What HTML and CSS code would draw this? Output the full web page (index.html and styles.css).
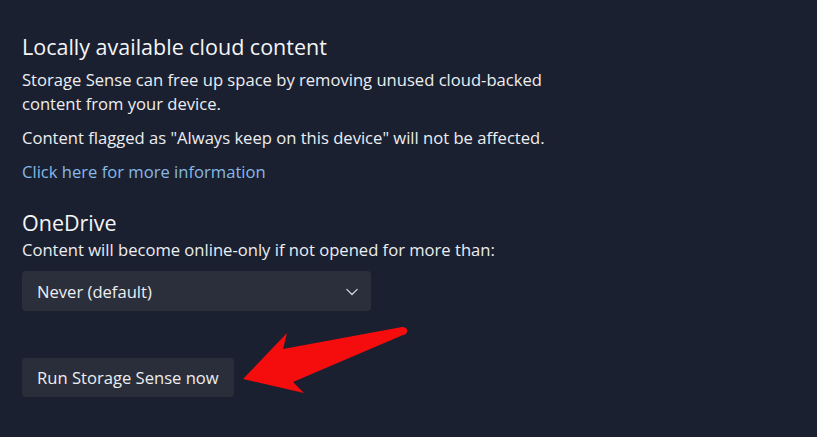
FILE: index.html
```html
<!DOCTYPE html>
<html>
<head>
<meta charset="utf-8">
<link rel="stylesheet" href="styles.css">
</head>
<body>
<div class="page">
  <section class="group">
    <h2 class="title">Locally available cloud content</h2>
    <p class="text first">Storage Sense can free up space by removing unused cloud-backed<br>content from your device.</p>
    <p class="text note">Content flagged as "Always keep on this device" will not be affected.</p>
    <a class="link" href="#">Click here for more information</a>
  </section>
  <section class="group onedrive">
    <h2 class="title">OneDrive</h2>
    <p class="text sub">Content will become online-only if not opened for more than:</p>
    <div class="select">
      <span>Never (default)</span>
      <svg class="chev" width="12" height="8" viewBox="0 0 12 8"><path d="M0.8 1.3 L6 6.5 L11.2 1.3" fill="none" stroke="#d6d8de" stroke-width="1.2" stroke-linecap="round" stroke-linejoin="round"/></svg>
    </div>
  </section>
  <div class="actions">
    <button class="btn">Run Storage Sense now</button>
  </div>
  <svg class="arrow" width="817" height="437" viewBox="0 0 817 437">
    <path d="M243 379 L287 333 L283 349 L402 327 Q408 327 407 332 Q406 335 403 335 L293 382 L304 393 Z" fill="#f50c0c"/>
  </svg>
</div>
</body>
</html>
```
FILE: styles.css
```css
html, body {
  margin: 0;
  padding: 0;
  background: #1b2030;
  width: 817px;
  height: 437px;
  overflow: hidden;
}
.page {
  position: relative;
  padding: 33px 0 0 22px;
  font-family: "Open Sans", "Noto Sans", sans-serif;
  color: #eceef1;
  box-sizing: border-box;
  height: 437px;
}
.title {
  margin: 0;
  font-weight: 400;
  font-size: 21.5px;
  line-height: 28px;
  color: #f4f5f7;
}
.text {
  margin: 0;
  font-size: 16.6px;
  line-height: 24px;
}
.first {
  margin-top: 7px;
}
.note {
  margin-top: 10px;
}
.link {
  display: block;
  margin-top: 10px;
  font-size: 16.6px;
  line-height: 24px;
  color: #85b9e6;
  text-decoration: none;
}
.onedrive {
  margin-top: 25px;
}
.sub {
  margin-top: 1px;
}
.select {
  margin-top: 9px;
  width: 349px;
  height: 40px;
  box-sizing: border-box;
  background: #2b2f3b;
  border-radius: 4px;
  display: flex;
  align-items: center;
  justify-content: space-between;
  padding: 0 13px 0 15px;
  font-size: 16.6px;
  color: #eceef1;
}
.chev {
  margin-top: 1px;
}
.actions {
  margin-top: 47px;
}
.btn {
  height: 39px;
  width: 212px;
  background: #2a2e3a;
  color: #eceef1;
  border: none;
  border-radius: 4px;
  font-family: inherit;
  font-size: 16.6px;
  padding: 0 15px;
  text-align: left;
}
.arrow {
  position: absolute;
  left: 0;
  top: 0;
  pointer-events: none;
}
```
